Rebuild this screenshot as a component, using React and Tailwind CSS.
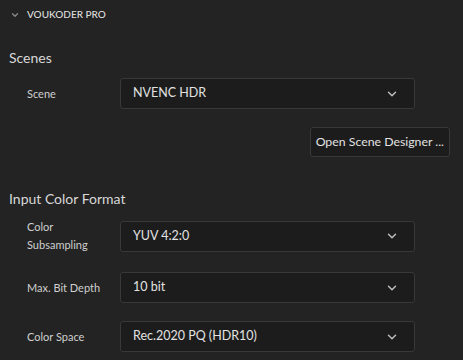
import React from 'react';
import { ChevronDown } from 'lucide-react';

const Select = ({ value }) => (
  <div className="shrink-0 w-[295px] h-[31px] flex items-center justify-between pl-3 pr-3 bg-[#1c1c1c] border border-[#383838] rounded-[3px] text-[12.5px] text-[#e2e2e2]">
    <span>{value}</span>
    <ChevronDown className="w-[14px] h-[14px] text-[#bdbdbd] mr-[3px]" strokeWidth={2.5} />
  </div>
);

const Row = ({ label, value }) => (
  <div className="flex items-center">
    <div className="shrink-0 w-[120px] pl-[27px] text-[11px] leading-[18px] text-[#cfcfcf]">{label}</div>
    <Select value={value} />
  </div>
);

export default function App() {
  return (
    <div className="w-[463px] h-[360px] bg-[#232323] overflow-hidden" style={{ fontFamily: 'Lato, "Open Sans", sans-serif' }}>
      <div className="flex items-center h-[29px] pl-[10px]">
        <ChevronDown className="w-[10px] h-[10px] text-[#8a8a8a]" strokeWidth={3} />
        <span className="ml-[7px] text-[10px] font-medium text-[#dedede]">VOUKODER PRO</span>
      </div>
      <div className="pl-[9px] pt-[19px] text-[14px] leading-[20px] text-[#d8d8d8]">Scenes</div>
      <div className="mt-[10px] flex flex-col gap-[18px]">
        <Row label="Scene" value="NVENC HDR" />
        <div className="flex justify-end pr-[13px]">
          <button className="h-[30px] px-[5px] bg-[#1c1c1c] border border-[#383838] rounded-[3px] text-[12.3px] text-[#e2e2e2]">
            Open Scene Designer ...
          </button>
        </div>
      </div>
      <div className="pl-[9px] pt-[32px] text-[14px] leading-[20px] text-[#d8d8d8]">Input Color Format</div>
      <div className="mt-[9px] flex flex-col gap-[18px]">
        <Row label={<>Color<br />Subsampling</>} value="YUV 4:2:0" />
        <Row label="Max. Bit Depth" value="10 bit" />
        <Row label="Color Space" value="Rec.2020 PQ (HDR10)" />
      </div>
    </div>
  );
}
